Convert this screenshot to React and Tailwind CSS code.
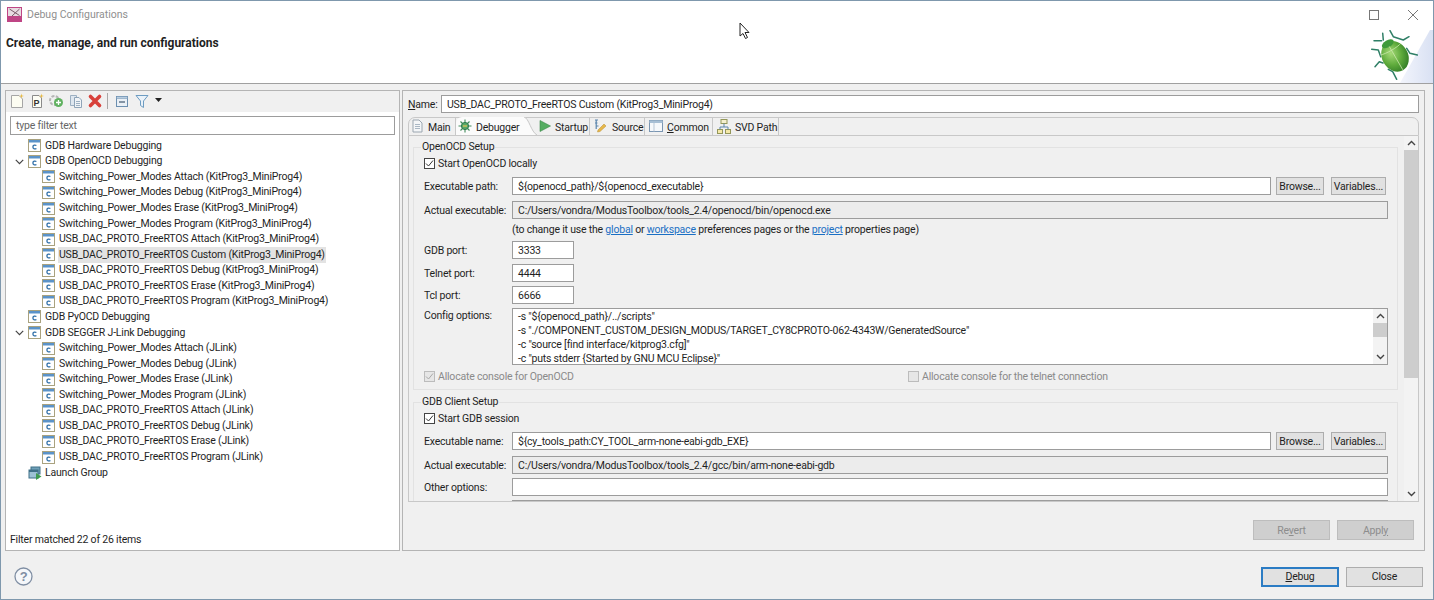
const kit = 'KitProg3_MiniProg4';

const tree = [
  { label: 'GDB Hardware Debugging', level: 0 },
  { label: 'GDB OpenOCD Debugging', level: 0, open: true },
  { label: `Switching_Power_Modes Attach (${kit})`, level: 1 },
  { label: `Switching_Power_Modes Debug (${kit})`, level: 1 },
  { label: `Switching_Power_Modes Erase (${kit})`, level: 1 },
  { label: `Switching_Power_Modes Program (${kit})`, level: 1 },
  { label: `USB_DAC_PROTO_FreeRTOS Attach (${kit})`, level: 1 },
  { label: `USB_DAC_PROTO_FreeRTOS Custom (${kit})`, level: 1, selected: true },
  { label: `USB_DAC_PROTO_FreeRTOS Debug (${kit})`, level: 1 },
  { label: `USB_DAC_PROTO_FreeRTOS Erase (${kit})`, level: 1 },
  { label: `USB_DAC_PROTO_FreeRTOS Program (${kit})`, level: 1 },
  { label: 'GDB PyOCD Debugging', level: 0 },
  { label: 'GDB SEGGER J-Link Debugging', level: 0, open: true },
  { label: 'Switching_Power_Modes Attach (JLink)', level: 1 },
  { label: 'Switching_Power_Modes Debug (JLink)', level: 1 },
  { label: 'Switching_Power_Modes Erase (JLink)', level: 1 },
  { label: 'Switching_Power_Modes Program (JLink)', level: 1 },
  { label: 'USB_DAC_PROTO_FreeRTOS Attach (JLink)', level: 1 },
  { label: 'USB_DAC_PROTO_FreeRTOS Debug (JLink)', level: 1 },
  { label: 'USB_DAC_PROTO_FreeRTOS Erase (JLink)', level: 1 },
  { label: 'USB_DAC_PROTO_FreeRTOS Program (JLink)', level: 1 },
];

function ConfigIcon() {
  return (
    <svg width="13" height="13" viewBox="0 0 13 13" className="shrink-0">
      <rect x="0.5" y="0.5" width="12" height="12" fill="#fff" stroke="#a9a27f" />
      <rect x="1" y="1" width="11" height="2.5" fill="#5b93c9" />
      <path d="M8.4 6.6 C7.2 5.7 4.9 6 4.9 8 C4.9 10 7.2 10.3 8.4 9.4" fill="none" stroke="#2f6fa8" strokeWidth="1.3" />
    </svg>
  );
}

function LaunchGroupIcon() {
  return (
    <svg width="14" height="14" viewBox="0 0 14 14" className="shrink-0">
      <rect x="3" y="1" width="9" height="7" fill="#6fa0b8" stroke="#3f7088" />
      <rect x="1" y="4" width="9" height="8" fill="#9cc1d4" stroke="#3f7088" />
      <rect x="1" y="4" width="9" height="2" fill="#3f7088" />
      <path d="M8 7 L13.5 10.5 L8 14 Z" fill="#3e9b4f" />
    </svg>
  );
}

function TreeRow({ row }) {
  const indent = row.level === 1 ? 'pl-[36px]' : 'pl-[22px]';
  return (
    <div className={`flex h-[15.57px] items-center ${indent} relative`}>
      {row.open && (
        <svg width="9" height="6" viewBox="0 0 9 6" className="absolute left-[9px] top-[5px]">
          <path d="M0.8 0.8 L4.5 4.6 L8.2 0.8" fill="none" stroke="#444" strokeWidth="1.2" />
        </svg>
      )}
      <ConfigIcon />
      <span className={`ml-[3px] h-[16px] px-[1px] leading-[16px] whitespace-nowrap ${row.selected ? 'bg-[#e3e3e3]' : ''}`}>
        {row.label}
      </span>
    </div>
  );
}

function Toolbar() {
  return (
    <div className="flex h-[21px] items-center gap-[3.5px] bg-[#f0f0f0] pb-[2px] pl-[3px]">
      <svg width="16" height="16" viewBox="0 0 16 16">
        <path d="M2.5 2.5 H10 L13.5 6 V14.5 H2.5 Z" fill="#fdfdf2" stroke="#a6a6a6" />
        <path d="M12.5 0.5 L13 2.5 L15 3 L13 3.5 L12.5 5.5 L12 3.5 L10 3 L12 2.5 Z" fill="#e8b83c" />
      </svg>
      <svg width="16" height="16" viewBox="0 0 16 16">
        <path d="M3.5 2.5 H10 L12.5 5 V14.5 H3.5 Z" fill="#fdfdf5" stroke="#8a8a8a" />
        <text x="4.6" y="12.6" fontSize="9" fontWeight="700" fill="#333" fontFamily="Liberation Sans">P</text>
        <path d="M12.5 0.5 L13 2.5 L15 3 L13 3.5 L12.5 5.5 L12 3.5 L10 3 L12 2.5 Z" fill="#e8b83c" />
      </svg>
      <svg width="16" height="16" viewBox="0 0 16 16">
        <circle cx="6.5" cy="7.5" r="4.5" fill="none" stroke="#b5b5b5" strokeWidth="2" strokeDasharray="3 1.4" />
        <circle cx="10.5" cy="9.5" r="4.5" fill="#5fb15f" />
        <path d="M8 9.5 H13 M10.5 7 V12" stroke="#fff" strokeWidth="1.3" />
      </svg>
      <svg width="16" height="16" viewBox="0 0 16 16">
        <path d="M2.5 2.5 H8.5 V12.5 H2.5 Z" fill="#dfe7ef" stroke="#9db0c2" />
        <path d="M6.5 4.5 H11 L13.5 7 V14.5 H6.5 Z" fill="#f1f4f7" stroke="#8fa4b8" />
        <path d="M8 8.5 H12 M8 10.5 H12 M8 12.5 H12" stroke="#9db0c2" />
      </svg>
      <svg width="16" height="16" viewBox="0 0 16 16">
        <path d="M3.5 3.5 L12.5 12.5 M12.5 3.5 L3.5 12.5" stroke="#d8403a" strokeWidth="3.6" strokeLinecap="round" />
      </svg>
      <div className="h-[16px] w-px bg-[#a8a8a8]" />
      <svg width="16" height="16" viewBox="0 0 16 16" className="ml-[3px]">
        <rect x="2.5" y="3.5" width="11" height="10" fill="#eaf0f6" stroke="#6c8fb0" />
        <rect x="2.5" y="3.5" width="11" height="2" fill="#b9cde0" stroke="#6c8fb0" strokeWidth="0.5" />
        <path d="M5 9 H11" stroke="#40586f" strokeWidth="1.2" />
      </svg>
      <svg width="16" height="16" viewBox="0 0 16 16">
        <path d="M2 2.5 H14 L9.5 8 V14.5 L6.5 12.5 V8 Z" fill="#eaf2f9" stroke="#6d9cc2" />
      </svg>
      <svg width="7" height="5" viewBox="0 0 7 5" className="ml-[2px]">
        <path d="M0 0 H7 L3.5 4 Z" fill="#222" />
      </svg>
    </div>
  );
}

function TabIcon({ name }) {
  if (name === 'Main') {
    return (
      <svg width="11" height="14" viewBox="0 0 11 14" className="shrink-0">
        <path d="M1 1 H7 L10 4 V13 H1 Z" fill="#f4f6f8" stroke="#9ba6b0" />
        <path d="M3 5.5 H8 M3 7.5 H8 M3 9.5 H8" stroke="#a9b7c4" />
      </svg>
    );
  }
  if (name === 'Debugger') {
    return (
      <svg width="14" height="14" viewBox="0 0 14 14" className="shrink-0">
        <path d="M7 0.5 V13.5 M0.5 7 H13.5 M2.5 2.5 L11.5 11.5 M11.5 2.5 L2.5 11.5" stroke="#3f8a5a" strokeWidth="1.1" />
        <circle cx="7" cy="7" r="3.6" fill="#59a869" stroke="#2f7a4f" />
        <path d="M5 7 H9" stroke="#e7c65a" strokeWidth="1.2" />
      </svg>
    );
  }
  if (name === 'Startup') {
    return (
      <svg width="12" height="12" viewBox="0 0 12 12" className="shrink-0">
        <path d="M1 0.5 L11.5 6 L1 11.5 Z" fill="#55ad62" stroke="#3d8a4b" strokeWidth="0.6" />
      </svg>
    );
  }
  if (name === 'Source') {
    return (
      <svg width="13" height="14" viewBox="0 0 13 14" className="shrink-0">
        <path d="M1 1 H4 M1 4 H3.5 M2.2 1 V10 M2.2 7 H4.5" stroke="#5c86ad" strokeWidth="1.2" />
        <path d="M4 11 L10 5 L12 7 L6 12.5 L3.5 13 Z" fill="#e6b74a" stroke="#b98d2c" strokeWidth="0.5" />
      </svg>
    );
  }
  if (name === 'Common') {
    return (
      <svg width="14" height="12" viewBox="0 0 14 12" className="shrink-0">
        <rect x="0.5" y="0.5" width="13" height="11" fill="#f6f8fb" stroke="#7b96b2" />
        <rect x="0.5" y="0.5" width="13" height="2.5" fill="#a8bfd5" />
        <path d="M5 3 V11.5" stroke="#b7c6d6" />
      </svg>
    );
  }
  return (
    <svg width="14" height="15" viewBox="0 0 14 15" className="shrink-0">
      <rect x="4" y="0.5" width="6" height="4" fill="#f5f0d0" stroke="#94975a" />
      <rect x="0.5" y="10.5" width="5" height="4" fill="#f5e9a8" stroke="#94975a" />
      <rect x="8.5" y="10.5" width="5" height="4" fill="#f5e9a8" stroke="#94975a" />
      <path d="M7 4.5 V8 M3 10.5 V8 H11 V10.5" fill="none" stroke="#5d86ad" />
    </svg>
  );
}

function Tabs() {
  const rest = [
    { name: 'Startup', w: 'w-[53px]', pl: 'pl-[2px]', gap: 'gap-[4px]', label: 'Startup' },
    { name: 'Source', w: 'w-[55px]', pl: 'pl-[4px]', gap: 'gap-[5px]', label: 'Source' },
    { name: 'Common', w: 'w-[68px]', pl: 'pl-[4px]', gap: 'gap-[4px]', label: <><u>C</u>ommon</> },
    { name: 'SVD', w: 'w-[66px]', pl: 'pl-[4px]', gap: 'gap-[4px]', label: 'SVD Path' },
  ];
  return (
    <div className="mt-[4px] flex h-[19px] items-end rounded-t-[7px] border border-[#c8c8c8]">
      <div className="flex h-[18px] w-[47px] items-center gap-[5px] border-r border-[#c8c8c8] pl-[3px]">
        <TabIcon name="Main" />
        <span className="pt-[3px]">Main</span>
      </div>
      <div className="flex h-[18px] w-[68px] items-center gap-[4px] rounded-tl-[6px] bg-[#fbfbfb] pl-[2px]">
        <TabIcon name="Debugger" />
        <span className="pt-[3px]">Debugger</span>
      </div>
      <svg width="13" height="18" viewBox="0 0 13 18" className="shrink-0">
        <path d="M0 0 C5 1 7 15 13 18 H0 Z" fill="#fbfbfb" />
        <path d="M0 0 C5 1 7 15 13 18" fill="none" stroke="#c8c8c8" />
      </svg>
      {rest.map((t) => (
        <div key={t.name} className={`flex h-[18px] ${t.w} ${t.pl} ${t.gap} items-center border-r border-[#c8c8c8]`}>
          <TabIcon name={t.name} />
          <span className="whitespace-nowrap pt-[3px]">{t.label}</span>
        </div>
      ))}
    </div>
  );
}

function Check({ disabled }) {
  return (
    <svg width="11" height="11" viewBox="0 0 11 11" className="shrink-0">
      <rect x="0.5" y="0.5" width="10" height="10" fill={disabled ? '#e6e6e6' : '#fff'} stroke={disabled ? '#bcbcbc' : '#444'} />
      <path d="M2 5.5 L4.5 8 L9 2.5" fill="none" stroke={disabled ? '#a9a9a9' : '#333'} strokeWidth="1" />
    </svg>
  );
}

function Box({ value, className = '', disabled }) {
  return (
    <div className={`flex h-[18px] items-center overflow-hidden whitespace-nowrap border border-[#9c9c9c] px-[5px] pt-[2px] ${disabled ? 'bg-[#ececec]' : 'bg-white'} ${className}`}>
      {value}
    </div>
  );
}

function SmallBtn({ children, className = '' }) {
  return (
    <button type="button" className={`flex h-[18px] items-center justify-center border border-[#adadad] bg-[#e1e1e1] pt-[2px] ${className}`}>
      {children}
    </button>
  );
}

function PathRow({ label, value }) {
  return (
    <div className="flex items-center">
      <span className="w-[88px] shrink-0 whitespace-nowrap pt-[2px]">{label}</span>
      <Box value={value} className="w-[759px]" />
      <SmallBtn className="ml-[5px] w-[48px]">Browse...</SmallBtn>
      <SmallBtn className="ml-[7px] w-[55px]">Variables...</SmallBtn>
    </div>
  );
}

function ActualRow({ label, value, disabled = true, mt = 'mt-[6px]' }) {
  return (
    <div className={`flex items-center ${mt}`}>
      <span className="w-[88px] shrink-0 whitespace-nowrap pt-[2px]">{label}</span>
      <Box value={value} disabled={disabled} className="w-[876px]" />
    </div>
  );
}

function PortRow({ label, value, mt }) {
  return (
    <div className={`flex items-center ${mt}`}>
      <span className="w-[88px] shrink-0 pt-[2px]">{label}</span>
      <Box value={value} className="w-[62px]" />
    </div>
  );
}

function Scroller({ className = '', thumb }) {
  return (
    <div className={`flex w-[14px] shrink-0 flex-col items-center bg-[#f3f3f3] ${className}`}>
      <svg width="9" height="14" viewBox="0 0 9 14" className="shrink-0">
        <path d="M1 9 L4.5 5.5 L8 9" fill="none" stroke="#444" strokeWidth="1.4" />
      </svg>
      <div className={`w-full bg-[#cdcdcd] ${thumb}`} />
      <div className="flex-1" />
      <svg width="9" height="14" viewBox="0 0 9 14" className="shrink-0">
        <path d="M1 5 L4.5 8.5 L8 5" fill="none" stroke="#444" strokeWidth="1.4" />
      </svg>
    </div>
  );
}

function Form() {
  return (
    <div className="flex h-[366px] border border-t-0 border-[#c8c8c8]">
      <div className="min-w-0 flex-1 overflow-hidden pl-[4px] pr-[6px]">
        <fieldset className="mt-[3px] h-[251px] border border-[#e2e2e2] pl-[10px]">
          <legend className="-ml-[3px] px-[1px] leading-[16px]">OpenOCD Setup</legend>
          <div className="flex h-[16px] items-center gap-[3px]">
            <Check />
            <span className="pt-[2px]">Start OpenOCD locally</span>
          </div>
          <div className="mt-[6px]">
            <PathRow label="Executable path:" value="${openocd_path}/${openocd_executable}" />
          </div>
          <ActualRow label="Actual executable:" value="C:/Users/vondra/ModusToolbox/tools_2.4/openocd/bin/openocd.exe" />
          <div className="mt-[3px] h-[16px] pl-[88px] leading-[16px]">
            (to change it use the <a className="text-[#1a6fc4] underline">global</a> or{' '}
            <a className="text-[#1a6fc4] underline">workspace</a> preferences pages or the{' '}
            <a className="text-[#1a6fc4] underline">project</a> properties page)
          </div>
          <PortRow label="GDB port:" value="3333" mt="mt-[3px]" />
          <PortRow label="Telnet port:" value="4444" mt="mt-[5px]" />
          <PortRow label="Tcl port:" value="6666" mt="mt-[4px]" />
          <div className="mt-[4px] flex">
            <span className="w-[88px] shrink-0">Config options:</span>
            <div className="flex h-[57px] w-[876px] border border-[#9c9c9c] bg-white">
              <div className="flex-1 overflow-hidden pl-[5px] pt-[1px] leading-[14px] whitespace-nowrap">
                <div>-s "${'{'}openocd_path{'}'}/../scripts"</div>
                <div>-s "./COMPONENT_CUSTOM_DESIGN_MODUS/TARGET_CY8CPROTO-062-4343W/GeneratedSource"</div>
                <div>-c "source [find interface/kitprog3.cfg]"</div>
                <div>-c "puts stderr {'{'}Started by GNU MCU Eclipse{'}'}"</div>
              </div>
              <Scroller thumb="h-[14px]" />
            </div>
          </div>
          <div className="mt-[3px] flex h-[16px] items-center text-[#8a8a8a]">
            <div className="flex w-[484px] items-center gap-[3px]">
              <Check disabled />
              <span className="pt-[2px]">Allocate console for OpenOCD</span>
            </div>
            <div className="flex items-center gap-[3px]">
              <svg width="11" height="11" viewBox="0 0 11 11" className="shrink-0">
                <rect x="0.5" y="0.5" width="10" height="10" fill="#e6e6e6" stroke="#bcbcbc" />
              </svg>
              <span className="pt-[2px]">Allocate console for the telnet connection</span>
            </div>
          </div>
        </fieldset>
        <fieldset className="mt-[5px] h-[200px] border border-[#e2e2e2] pl-[10px]">
          <legend className="-ml-[3px] px-[1px] leading-[14px]">GDB Client Setup</legend>
          <div className="mt-[1px] flex h-[16px] items-center gap-[3px]">
            <Check />
            <span className="pt-[2px]">Start GDB session</span>
          </div>
          <div className="mt-[6px]">
            <PathRow label="Executable name:" value="${cy_tools_path:CY_TOOL_arm-none-eabi-gdb_EXE}" />
          </div>
          <ActualRow label="Actual executable:" value="C:/Users/vondra/ModusToolbox/tools_2.4/gcc/bin/arm-none-eabi-gdb" />
          <ActualRow label="Other options:" value="" disabled={false} mt="mt-[4px]" />
          <div className="ml-[88px] mt-[4px] h-[40px] w-[876px] border border-[#9c9c9c] bg-white" />
        </fieldset>
      </div>
      <Scroller thumb="h-[228px]" />
    </div>
  );
}

function Bug() {
  return (
    <svg width="63" height="53" viewBox="0 0 63 53" className="mt-[2px] shrink-0">
      <defs>
        <radialGradient id="shell" cx="42%" cy="35%" r="70%">
          <stop offset="0%" stopColor="#a6da78" />
          <stop offset="55%" stopColor="#5fab3c" />
          <stop offset="100%" stopColor="#2f7a25" />
        </radialGradient>
        <linearGradient id="corner" x1="0" y1="0" x2="1" y2="0">
          <stop offset="0%" stopColor="#f3f5fc" />
          <stop offset="100%" stopColor="#d9e1f3" />
        </linearGradient>
      </defs>
      <path d="M60 0 H63 V53 H30 Z" fill="url(#corner)" />
      <g fill="none" stroke="#2f7f66" strokeWidth="1.5" strokeLinecap="round" strokeLinejoin="round">
        <path d="M12.7 3.3 L13.3 10" />
        <path d="M20 0.7 L23.3 6.7 L33.3 10 L39 6.7" />
        <path d="M4 10.7 L11.7 10.7" />
        <path d="M1.7 19.3 L8.3 20 L10.7 26.7" />
        <path d="M5 36.7 L9.3 31.7 L13 33" />
        <path d="M26.7 49.3 L22.7 41.7 L18.3 39.3" />
        <path d="M47.3 25 L40 23.3 L36.7 18.3" />
      </g>
      <g transform="rotate(-30 24.5 25.5)">
        <ellipse cx="24.5" cy="26.5" rx="13" ry="16" fill="url(#shell)" />
        <ellipse cx="24.5" cy="12" rx="6.5" ry="3.5" fill="#3f9a3a" />
        <path d="M24.5 15 V42 M12.5 18 C18 20 31 20 36.5 18" fill="none" stroke="#cfeab0" strokeWidth="0.7" />
      </g>
    </svg>
  );
}

function Cursor() {
  return (
    <svg width="12" height="18" viewBox="0 0 12 18" className="absolute left-[738px] top-[21px]">
      <path d="M1 1 V14 L4 11.5 L6.5 16.5 L8.5 15.5 L6 10.5 H10 Z" fill="#fff" stroke="#222" strokeWidth="1" strokeLinejoin="round" />
    </svg>
  );
}

export default function App() {
  return (
    <div className="relative flex h-[600px] w-[1434px] flex-col overflow-hidden border border-[#7f98ad] bg-[#f0f0f0] font-['Roboto',sans-serif] text-[10.5px] tracking-[-0.2px] text-[#1f1f1f]">
      <div className="h-[83px] shrink-0 border-b border-[#a0a0a0] bg-white tracking-normal">
        <div className="flex h-[27px] items-center">
          <svg width="15" height="15" viewBox="0 0 15 15" className="ml-[6px]">
            <rect width="15" height="15" fill="#bf4585" />
            <rect x="1" y="1" width="13" height="8" fill="#e8dbe1" />
            <path d="M2.5 2 L12.5 8.5 M12.5 2 L5 9" fill="none" stroke="#7a5a68" />
          </svg>
          <span className="ml-[5px] text-[#8f8f8f]">Debug Configurations</span>
          <div className="flex-1" />
          <svg width="12" height="12" viewBox="0 0 12 12" className="mr-[27px]">
            <rect x="1.5" y="1.5" width="9" height="9" fill="none" stroke="#777" />
          </svg>
          <svg width="12" height="12" viewBox="0 0 12 12" className="mr-[14px]">
            <path d="M1 1 L11 11 M11 1 L1 11" stroke="#777" />
          </svg>
        </div>
        <div className="flex justify-between">
          <div className="ml-[5px] mt-[6px] text-[12px] font-bold">Create, manage, and run configurations</div>
          <Bug />
        </div>
      </div>

      <div className="flex h-[467px] shrink-0 gap-[2px] pl-[4px] pr-[8px] pt-[6px]">
        <div className="relative flex w-[395px] shrink-0 flex-col border border-[#b4b4b4] bg-white">
          <Toolbar />
          <div className="mx-[4px] mt-[4px] flex h-[19px] items-center border border-[#9c9c9c] bg-white pl-[5px] pt-[1px] text-[#666]">
            type filter text
          </div>
          <div className="mt-[3px]">
            {tree.map((row) => (
              <TreeRow key={row.label} row={row} />
            ))}
            <div className="flex h-[15.57px] items-center pl-[22px]">
              <LaunchGroupIcon />
              <span className="ml-[3px]">Launch Group</span>
            </div>
          </div>
          <div className="absolute bottom-[2px] left-[4px]">Filter matched 22 of 26 items</div>
        </div>

        <div className="flex min-w-0 flex-1 flex-col border border-[#b4b4b4] px-[5px]">
          <div className="mt-[4px] flex items-center">
            <span className="w-[33px] pt-[2px]"><u>N</u>ame:</span>
            <Box value="USB_DAC_PROTO_FreeRTOS Custom (KitProg3_MiniProg4)" className="flex-1" />
          </div>
          <Tabs />
          <Form />
          <div className="mt-[18px] flex justify-end gap-[7px] pr-[5px]">
            <button type="button" className="h-[20px] w-[77px] border border-[#bdbdbd] bg-[#cfcfcf] pt-[1px] text-[#8d8d8d]">Re<u>v</u>ert</button>
            <button type="button" className="h-[20px] w-[77px] border border-[#bdbdbd] bg-[#cfcfcf] pt-[1px] text-[#8d8d8d]">Appl<u>y</u></button>
          </div>
        </div>
      </div>

      <div className="flex flex-1 items-center pl-[13px] pr-[10px] pt-[3px]">
        <svg width="19" height="19" viewBox="0 0 19 19">
          <circle cx="9.5" cy="9.5" r="8.5" fill="#f5f7fa" stroke="#7f8ea3" strokeWidth="1.3" />
          <text x="9.5" y="14" textAnchor="middle" fontSize="13" fontWeight="700" fill="#7f8ea3" fontFamily="Liberation Sans">?</text>
        </svg>
        <div className="flex-1" />
        <button type="button" className="h-[20px] w-[78px] border-2 border-[#2b7cc4] bg-[#e1e1e1]"><u>D</u>ebug</button>
        <button type="button" className="ml-[7px] h-[20px] w-[77px] border border-[#adadad] bg-[#e1e1e1]">Close</button>
      </div>

      <Cursor />
    </div>
  );
}
